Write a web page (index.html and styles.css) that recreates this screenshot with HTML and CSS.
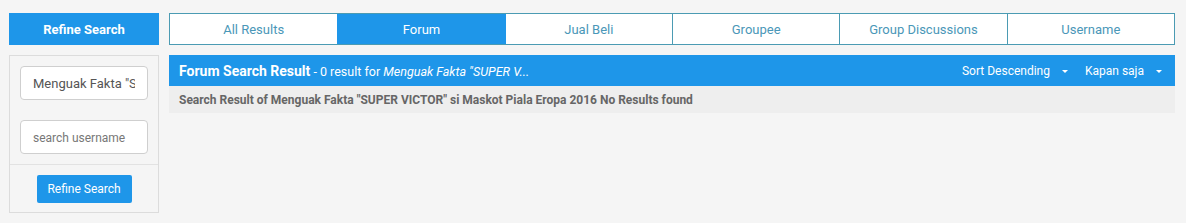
FILE: index.html
```html
<!DOCTYPE html>
<html>
<head>
<meta charset="utf-8">
<link rel="stylesheet" href="styles.css">
</head>
<body>
<div class="page">
  <aside class="sidebar">
    <div class="side-head">Refine Search</div>
    <div class="side-panel">
      <div class="fields">
        <input class="field" type="text" value="Menguak Fakta &quot;SUPER VICTOR&quot; si Maskot Piala Eropa 2016">
        <input class="field" type="text" placeholder="search username">
      </div>
      <div class="side-foot">
        <button class="btn">Refine Search</button>
      </div>
    </div>
  </aside>
  <main class="main">
    <nav class="tabs">
      <a class="tab">All Results</a>
      <a class="tab active">Forum</a>
      <a class="tab">Jual Beli</a>
      <a class="tab">Groupee</a>
      <a class="tab">Group Discussions</a>
      <a class="tab">Username</a>
    </nav>
    <div class="result-head">
      <div class="title"><b>Forum Search Result</b> - 0 result for <i>Menguak Fakta "SUPER V...</i></div>
      <div class="filters">
        <span class="dd">Sort Descending <span class="caret"></span></span>
        <span class="dd">Kapan saja <span class="caret"></span></span>
      </div>
    </div>
    <div class="result-body">Search Result of Menguak Fakta "SUPER VICTOR" si Maskot Piala Eropa 2016 No Results found</div>
  </main>
</div>
</body>
</html>
```
FILE: styles.css
```css
html, body {
  margin: 0;
  padding: 0;
  background: #f5f5f5;
  font-family: Roboto, "Liberation Sans", sans-serif;
}
.page {
  display: flex;
  gap: 10px;
  padding: 13px 11px 0 9px;
}
.sidebar {
  width: 150px;
  flex: none;
  display: flex;
  flex-direction: column;
  gap: 10px;
}
.side-head {
  height: 32px;
  background: #1e96e9;
  color: #fff;
  font-weight: bold;
  font-size: 13px;
  display: flex;
  align-items: center;
  justify-content: center;
}
.side-panel {
  border: 1px solid #dcdcdc;
  background: #f5f5f5;
  height: 158px;
  box-sizing: border-box;
}
.fields {
  display: flex;
  flex-direction: column;
  gap: 20px;
  padding: 10px;
  border-bottom: 1px solid #e2e2e2;
}
.field {
  box-sizing: border-box;
  width: 128px;
  height: 34px;
  border: 1px solid #cfcfcf;
  border-radius: 4px;
  background: #fff;
  padding: 0 12px;
  font-family: Roboto, "Liberation Sans", sans-serif;
  font-size: 13px;
  color: #555;
  outline: none;
}
.field::placeholder { color: #777; font-size: 12px; }
.side-foot {
  display: flex;
  justify-content: center;
  padding: 10px 0;
}
.btn {
  width: 95px;
  height: 28px;
  border: 0;
  border-radius: 2px;
  background: #1e96e9;
  color: #fff;
  font-family: Roboto, "Liberation Sans", sans-serif;
  font-size: 12px;
  padding: 0;
}
.main {
  flex: 1;
  display: flex;
  flex-direction: column;
}
.tabs {
  display: grid;
  grid-template-columns: repeat(6, 1fr);
  height: 32px;
  border: 1px solid #4b9bb3;
  box-sizing: border-box;
  background: #fff;
  margin-bottom: 10px;
}
.tab {
  display: flex;
  align-items: center;
  justify-content: center;
  font-size: 13px;
  color: #4a97b8;
  border-left: 1px solid #4b9bb3;
}
.tab:first-child { border-left: 0; }
.tab.active {
  background: #1e96e9;
  color: #fff;
  border-left-color: #1e96e9;
}
.tab.active + .tab { border-left-color: #1e96e9; }
.result-head {
  height: 31px;
  background: #1e96e9;
  color: #fff;
  display: flex;
  align-items: center;
  justify-content: space-between;
  padding: 0 13px 0 10px;
}
.title {
  font-size: 12.5px;
}
.title b {
  font-size: 14px;
}
.filters {
  display: flex;
  gap: 17px;
  font-size: 12px;
}
.dd {
  display: flex;
  align-items: center;
  gap: 12px;
}
.caret {
  width: 0;
  height: 0;
  border-left: 3px solid transparent;
  border-right: 3px solid transparent;
  border-top: 3px solid #fff;
  margin-top: 1px;
}
.result-body {
  height: 27px;
  background: #eeeeee;
  display: flex;
  align-items: center;
  padding: 0 10px;
  font-size: 12px;
  font-weight: bold;
  color: #666;
}
```
